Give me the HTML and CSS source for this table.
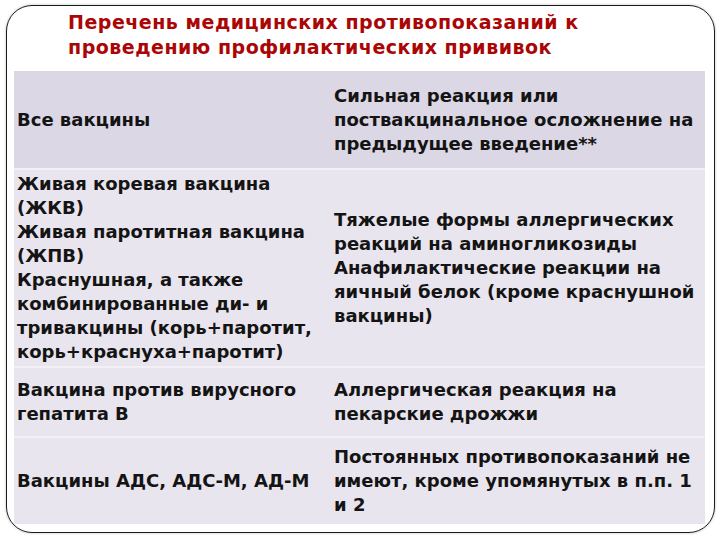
FILE: index.html
```html
<!DOCTYPE html>
<html lang="ru">
<head>
<meta charset="utf-8">
<link rel="stylesheet" href="styles.css">
</head>
<body>
<div class="slide">
  <h1 class="title">Перечень медицинских противопоказаний к<br>проведению профилактических прививок</h1>
  <table class="grid">
    <tr class="row head">
      <td class="c1">Все вакцины</td>
      <td class="c2">Сильная реакция или<br>поствакцинальное осложнение на<br>предыдущее введение**</td>
    </tr>
    <tr class="row r2">
      <td class="c1">Живая коревая вакцина<br>(ЖКВ)<br>Живая паротитная вакцина<br>(ЖПВ)<br>Краснушная, а также<br>комбинированные ди- и<br>тривакцины (корь+паротит,<br>корь+краснуха+паротит)</td>
      <td class="c2">Тяжелые формы аллергических<br>реакций на аминогликозиды<br>Анафилактические реакции на<br>яичный белок (кроме краснушной<br>вакцины)</td>
    </tr>
    <tr class="row r3">
      <td class="c1">Вакцина против вирусного<br>гепатита В</td>
      <td class="c2">Аллергическая реакция на<br>пекарские дрожжи</td>
    </tr>
    <tr class="row r4">
      <td class="c1">Вакцины АДС, АДС-М, АД-М</td>
      <td class="c2">Постоянных противопоказаний не<br>имеют, кроме упомянутых в п.п. 1<br>и 2</td>
    </tr>
  </table>
</div>
</body>
</html>
```

FILE: styles.css
```css
html, body {
  margin: 0;
  padding: 0;
  background: #ffffff;
}
body {
  width: 720px;
  height: 540px;
  overflow: hidden;
}
.slide {
  box-sizing: border-box;
  width: 709px;
  height: 528px;
  margin: 5px 0 0 6px;
  border: 1.5px solid #1a1a1a;
  border-radius: 26px;
  box-shadow: 0 0 2px 1px rgba(0, 0, 0, 0.12);
  padding: 4px 0 0 7px;
  display: flex;
  flex-direction: column;
}
.title {
  margin: 0 0 0 54px;
  font-family: "DejaVu Sans", sans-serif;
  font-weight: bold;
  font-size: 19px;
  letter-spacing: 0.5px;
  line-height: 25px;
  color: #ab0606;
  white-space: nowrap;
  height: 61px;
  flex: none;
}
.grid {
  width: 691px;
  border-collapse: collapse;
  border-spacing: 0;
  font-family: "DejaVu Sans", "Verdana", sans-serif;
  font-weight: bold;
  font-size: 18px;
  line-height: 24px;
  color: #141414;
}
.row td {
  padding: 0 0 0 3px;
  vertical-align: middle;
  white-space: nowrap;
  background: #e9e5ee;
  border-bottom: 2px solid #f2eff5;
}
.row.head td {
  background: #dcd7e5;
}
.c1 {
  width: 314px;
}
.head td { height: 97px; }
.r2 td { height: 196px; }
.r3 td { height: 68px; }
.r4 td { height: 86px; border-bottom: none; }
```
